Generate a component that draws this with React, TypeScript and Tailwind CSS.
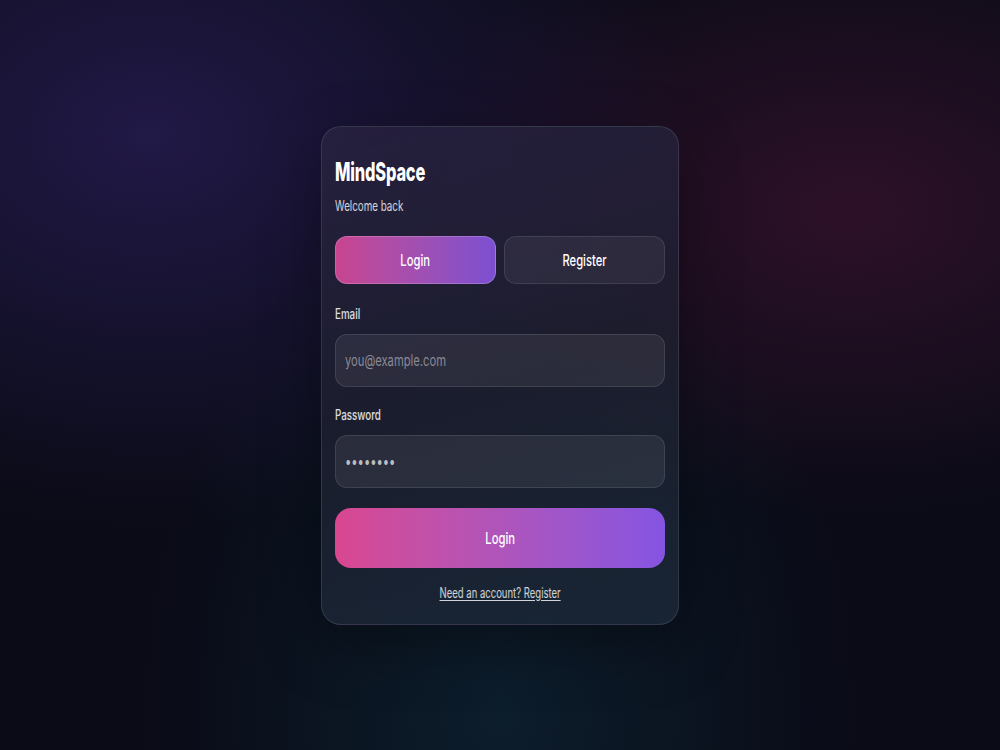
import { useState, type ReactNode } from 'react';

type Mode = 'login' | 'register';

const font = "font-['Inter','Noto_Sans',sans-serif]";

function Narrow({
  children,
  center = false,
  className = 'scale-x-[0.7]',
}: {
  children: ReactNode;
  center?: boolean;
  className?: string;
}) {
  return (
    <span className={`inline-block ${center ? 'origin-center' : 'origin-left'} ${className}`}>
      {children}
    </span>
  );
}

function Field({
  type,
  value,
  placeholder,
  onChange,
  className = '',
}: {
  type: string;
  value: string;
  placeholder?: string;
  onChange: (v: string) => void;
  className?: string;
}) {
  return (
    <div className="mt-[10px] flex h-[53px] w-full items-center overflow-hidden rounded-xl border border-white/10 bg-white/[0.07] px-[9px]">
      <input
        type={type}
        value={value}
        placeholder={placeholder}
        onChange={e => onChange(e.target.value)}
        className={`w-[143%] shrink-0 origin-left scale-x-[0.7] bg-transparent text-[16px] outline-none placeholder:text-white/45 ${className}`}
      />
    </div>
  );
}

export default function App() {
  const [mode, setMode] = useState<Mode>('login');
  const [email, setEmail] = useState('');
  const [password, setPassword] = useState('password');

  const tab = (active: boolean) =>
    `h-12 rounded-xl border text-[16px] font-medium text-white ${
      active
        ? 'border-white/20 bg-gradient-to-r from-[#c8448f] to-[#7c4fd1]'
        : 'border-white/10 bg-white/[0.06]'
    }`;

  return (
    <div
      className={`min-h-screen w-full flex items-center justify-center bg-[#0a0b16] bg-[radial-gradient(ellipse_at_15%_18%,rgba(52,36,110,0.55),transparent_45%),radial-gradient(ellipse_at_85%_28%,rgba(80,22,60,0.5),transparent_40%),radial-gradient(ellipse_at_50%_95%,rgba(14,44,62,0.55),transparent_50%)] ${font}`}
    >
      {/* Auth card */}
      <div className="w-[358px] rounded-[20px] border border-white/10 bg-[linear-gradient(165deg,rgba(40,34,64,0.85),rgba(30,32,48,0.8)_50%,rgba(27,40,56,0.85))] px-[13px] pt-[29px] pb-[21px] shadow-[0_20px_60px_rgba(0,0,0,0.35)]">
        <h1 className="text-[26px] font-extrabold leading-[32px] tracking-[-0.01em] text-white">
          <Narrow className="scale-x-[0.63]">MindSpace</Narrow>
        </h1>
        <p className="mt-[8px] text-[14px] leading-5 text-white/80">
          <Narrow>Welcome back</Narrow>
        </p>

        {/* Mode switch */}
        <div className="mt-5 grid grid-cols-2 gap-2">
          <button onClick={() => setMode('login')} className={tab(mode === 'login')}>
            <Narrow center>Login</Narrow>
          </button>
          <button onClick={() => setMode('register')} className={tab(mode === 'register')}>
            <Narrow center>Register</Narrow>
          </button>
        </div>

        {/* Fields */}
        <label className="mt-5 block text-[14px] font-medium leading-5 text-white/85">
          <Narrow>Email</Narrow>
        </label>
        <Field
          type="email"
          value={email}
          onChange={setEmail}
          placeholder="you@example.com"
          className="text-white"
        />

        <label className="mt-[18px] block text-[14px] font-medium leading-5 text-white/85">
          <Narrow>Password</Narrow>
        </label>
        <Field type="password" value={password} onChange={setPassword} className="text-white/70" />

        <button className="mt-5 h-[60px] w-full rounded-2xl bg-gradient-to-r from-[#d94690] to-[#8554e2] text-[16px] font-medium text-white">
          <Narrow center>{mode === 'login' ? 'Login' : 'Register'}</Narrow>
        </button>

        <div className="mt-[14px] text-center leading-5">
          <button
            onClick={() => setMode(mode === 'login' ? 'register' : 'login')}
            className="text-[14px] text-white/80"
          >
            <Narrow center className="scale-x-[0.68] underline underline-offset-2">
              {mode === 'login' ? 'Need an account? Register' : 'Have an account? Login'}
            </Narrow>
          </button>
        </div>
      </div>
    </div>
  );
}
